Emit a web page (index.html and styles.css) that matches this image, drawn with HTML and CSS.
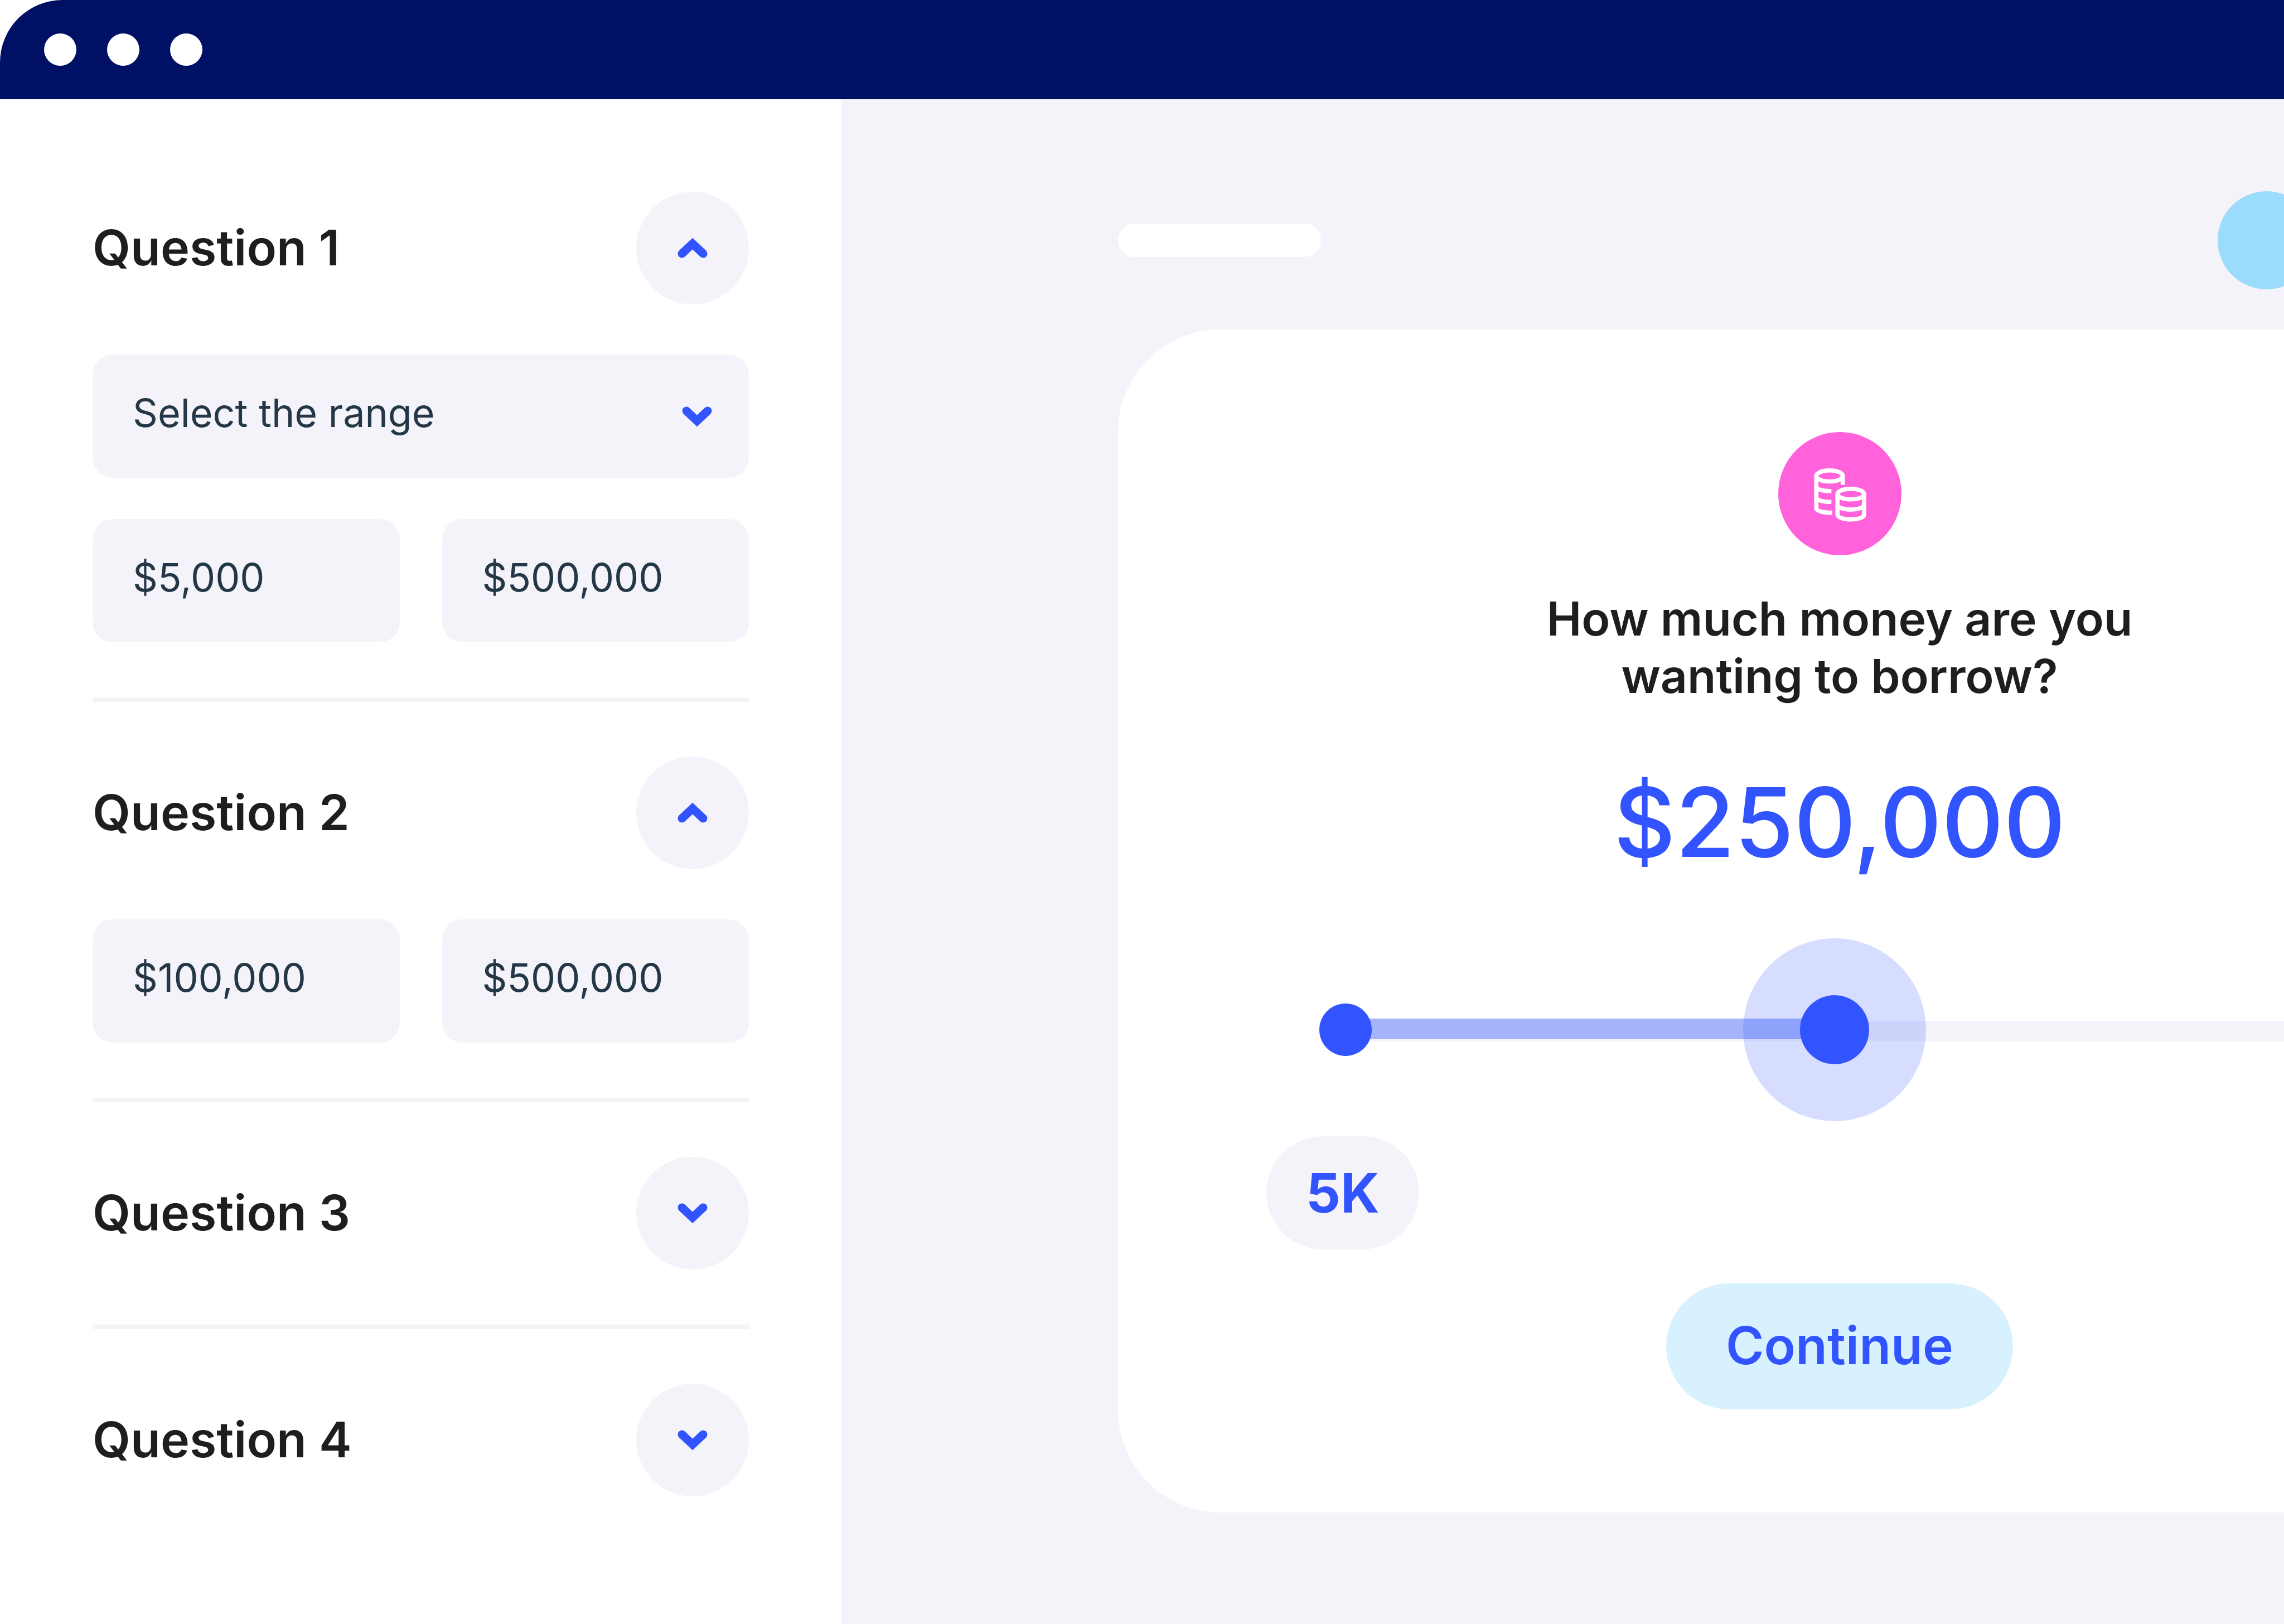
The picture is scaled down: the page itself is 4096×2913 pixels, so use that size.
FILE: index.html
```html
<!DOCTYPE html>
<html lang="en">
<head>
  <meta charset="utf-8">
  <meta name="viewport" content="width=device-width, initial-scale=1">
  <title>Loan form builder</title>
  <link rel="stylesheet" href="styles.css">
</head>
<body>
  <svg class="symbols" aria-hidden="true">
    <symbol id="chevron-up" viewBox="0 0 56 40"><path d="M9 30 28 12 47 30"/></symbol>
    <symbol id="chevron-down" viewBox="0 0 56 40"><path d="M9 10 28 28 47 10"/></symbol>
  </svg>

  <header class="titlebar">
    <span class="dot"></span>
    <span class="dot"></span>
    <span class="dot"></span>
  </header>

  <div class="layout">
    <aside class="sidebar">
      <section class="question">
        <div class="question-head">
          <h2 class="question-title">Question 1</h2>
          <button class="toggle" type="button" aria-label="Collapse question 1" aria-expanded="true"><svg class="chevron"><use href="#chevron-up"/></svg></button>
        </div>
        <div class="fields">
          <div class="select">
            <select class="field" aria-label="Range type">
              <option>Select the range</option>
            </select>
            <svg class="chevron" aria-hidden="true"><use href="#chevron-down"/></svg>
          </div>
          <div class="range">
            <input class="field" type="text" value="$5,000" aria-label="Question 1 minimum">
            <input class="field" type="text" value="$500,000" aria-label="Question 1 maximum">
          </div>
        </div>
      </section>

      <section class="question">
        <div class="question-head">
          <h2 class="question-title">Question 2</h2>
          <button class="toggle" type="button" aria-label="Collapse question 2" aria-expanded="true"><svg class="chevron"><use href="#chevron-up"/></svg></button>
        </div>
        <div class="fields">
          <div class="range">
            <input class="field" type="text" value="$100,000" aria-label="Question 2 minimum">
            <input class="field" type="text" value="$500,000" aria-label="Question 2 maximum">
          </div>
        </div>
      </section>

      <section class="question">
        <div class="question-head">
          <h2 class="question-title">Question 3</h2>
          <button class="toggle" type="button" aria-label="Expand question 3" aria-expanded="false"><svg class="chevron"><use href="#chevron-down"/></svg></button>
        </div>
      </section>

      <section class="question">
        <div class="question-head">
          <h2 class="question-title">Question 4</h2>
          <button class="toggle" type="button" aria-label="Expand question 4" aria-expanded="false"><svg class="chevron"><use href="#chevron-down"/></svg></button>
        </div>
      </section>
    </aside>

    <main class="preview">
      <div class="preview-head">
        <span class="brand"></span>
        <span class="avatar"></span>
      </div>

      <form class="card">
        <svg class="coins" viewBox="253 146 932 932" aria-hidden="true">
          <circle class="coins-disc" cx="719" cy="612" r="466"/>
          <g class="coins-lines">
            <ellipse cx="641" cy="478" rx="100" ry="42"/>
            <path d="M741 478V545"/>
            <path d="M541 478V722C541 742 590 757 662 756"/>
            <path d="M541 560C541 580 590 594 655 592"/>
            <path d="M541 640C541 660 590 675 655 674"/>
            <ellipse cx="802" cy="615" rx="101" ry="40"/>
            <path d="M701 615V768C701 820 903 820 903 768V615"/>
            <path d="M701 693C701 745 903 745 903 693"/>
          </g>
        </svg>
        <label class="prompt" for="amount">How much money are you<br>wanting to borrow?</label>
        <output class="amount" for="amount">$250,000</output>
        <div class="slider">
          <span class="rail"></span>
          <span class="rail-fill"></span>
          <span class="rail-start"></span>
          <input class="slider-input" id="amount" type="range" min="5000" max="500000" step="5000" value="250000">
        </div>
        <span class="minimum">5K</span>
        <button class="continue" type="button">Continue</button>
      </form>
    </main>
  </div>
</body>
</html>
```
FILE: styles.css
```css
:root {
  --navy: #001064;
  --blue: #3254ff;
  --mist: #f4f3f9;
  --ink: #1e1e1e;
  --slate: #243746;
}

* {
  box-sizing: border-box;
}

body {
  margin: 0;
  min-height: 100vh;
  display: flex;
  flex-direction: column;
  background: #fff;
  color: var(--ink);
  font-family: Inter, "Liberation Sans", sans-serif;
}

button,
input,
select {
  border: 0;
  margin: 0;
  font-family: inherit;
}

.symbols {
  position: absolute;
  width: 0;
  height: 0;
}

/* Window bar */

.titlebar {
  display: flex;
  align-items: center;
  gap: 55px;
  height: 178px;
  padding-left: 79px;
  background: var(--navy);
  border-top-left-radius: 112px;
}

.dot {
  width: 58px;
  height: 58px;
  border-radius: 50%;
  background: #fff;
}

.layout {
  flex: 1;
  display: flex;
}

/* Question list */

.sidebar {
  flex: 0 0 1509px;
  padding: 68px 166px 98px;
}

.question {
  padding: 98px 0 99px;
  border-bottom: 8px solid #f3f3f3;
}

.question:last-child {
  border-bottom: 0;
}

.question-head {
  display: flex;
  align-items: center;
  justify-content: space-between;
}

.question-title {
  margin: 0;
  padding-bottom: 2px;
  font-size: 88px;
  font-weight: 600;
  line-height: 112px;
}

.toggle {
  display: flex;
  align-items: center;
  justify-content: center;
  width: 202px;
  height: 202px;
  padding: 0;
  border-radius: 50%;
  background: var(--mist);
}

.chevron {
  width: 56px;
  height: 40px;
  fill: none;
  stroke: var(--blue);
  stroke-width: 15px;
  stroke-linecap: round;
}

.fields {
  display: flex;
  flex-direction: column;
  gap: 74px;
  padding-top: 90px;
}

.range {
  display: flex;
  gap: 76px;
}

.field {
  flex: 1;
  min-width: 0;
  width: 100%;
  height: 221px;
  padding: 0 72px 12px;
  border-radius: 36px;
  background: var(--mist);
  color: var(--slate);
  font-size: 70px;
  font-weight: 400;
  appearance: none;
}

.select {
  display: grid;
  align-items: center;
}

.select > * {
  grid-area: 1 / 1;
}

.select .chevron {
  justify-self: end;
  margin-right: 65px;
  pointer-events: none;
}

/* Form preview */

.preview {
  flex: 1;
  min-width: 0;
  padding: 165px 0 201px 496px;
  overflow: hidden;
  background: var(--mist);
}

.preview-head {
  display: flex;
  align-items: center;
  justify-content: space-between;
  margin: 0 -57px 72px 0;
}

.brand {
  width: 364px;
  height: 60px;
  border-radius: 30px;
  background: #fff;
}

.avatar {
  width: 176px;
  height: 176px;
  border-radius: 50%;
  background: #9bdbfc;
}

.card {
  display: flex;
  flex-direction: column;
  align-items: center;
  margin-right: -497px;
  padding: 184px 266px 185px;
  border-radius: 184px;
  background: #fff;
}

.coins {
  width: 221px;
  height: 221px;
}

.coins-disc {
  fill: #ff62da;
}

.coins-lines {
  fill: none;
  stroke: #fff;
  stroke-width: 32;
}

.prompt {
  margin-top: 62px;
  font-size: 84px;
  font-weight: 600;
  line-height: 103px;
  text-align: center;
}

.amount {
  margin-top: 110px;
  color: var(--blue);
  font-size: 172px;
  font-weight: 500;
  line-height: 200px;
}

.slider {
  position: relative;
  width: 1772px;
  margin-top: 109px;
}

.rail,
.rail-fill,
.rail-start {
  position: absolute;
  left: 0;
}

.rail {
  top: 148px;
  right: 0;
  height: 37px;
  background: var(--mist);
}

.rail-fill {
  top: 144px;
  width: 50%;
  height: 37px;
  background: #a6b4fb;
}

.rail-start {
  top: 117px;
  width: 94px;
  height: 94px;
  margin-left: -47px;
  border-radius: 50%;
  background: var(--blue);
}

/* The input overhangs the rail by half a thumb at each end. */
.slider-input {
  position: relative;
  display: block;
  width: calc(100% + 328px);
  height: 328px;
  margin: 0 -164px;
  background: none;
  appearance: none;
}

.slider-input::-webkit-slider-thumb {
  box-sizing: border-box;
  width: 328px;
  height: 328px;
  border: 102px solid rgba(50, 84, 255, 0.2);
  border-radius: 50%;
  background: var(--blue);
  background-clip: padding-box;
  appearance: none;
}

.minimum {
  align-self: flex-start;
  width: 274px;
  margin-top: 27px;
  border-radius: 102px;
  background: var(--mist);
  color: var(--blue);
  font-size: 97px;
  font-weight: 700;
  line-height: 203px;
  text-align: center;
}

.continue {
  width: 622px;
  height: 226px;
  margin-top: 61px;
  padding: 0 0 4px;
  border-radius: 113px;
  background: #d8f1ff;
  color: var(--blue);
  font-size: 93px;
  font-weight: 600;
}
```
